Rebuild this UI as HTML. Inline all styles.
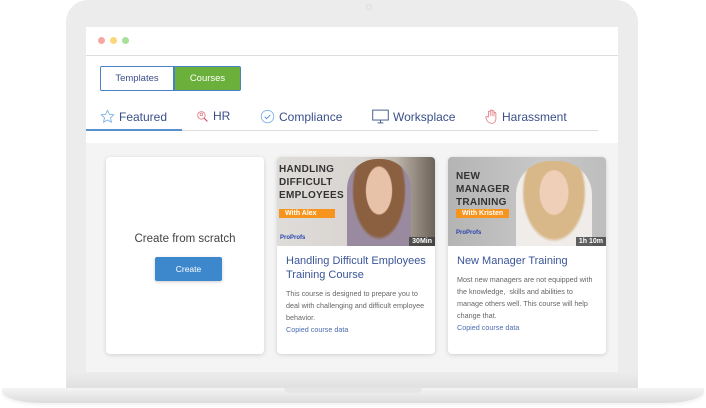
<!DOCTYPE html>
<html><head><meta charset="utf-8"><style>
*{margin:0;padding:0;box-sizing:border-box}
body{width:706px;height:408px;background:#fff;position:relative;overflow:hidden;font-family:"Liberation Sans",sans-serif}
.bezel{position:absolute;left:66px;top:0;width:572px;height:390px;background:#ececec;border-radius:22px 22px 0 0}
.screen{position:absolute;left:86px;top:27px;width:532px;height:345px;background:#f4f4f4;overflow:hidden}
.top{position:absolute;left:0;top:0;width:532px;height:116px;background:#fff}
.hdr{height:29px;border-bottom:1px solid #ddd;position:relative}
.dot{position:absolute;top:10px;width:7px;height:7px;border-radius:50%}
.base{position:absolute;left:2px;top:388px;width:702px;height:15px;background:linear-gradient(#f4f4f4,#dcdcdc);border-radius:2px 2px 40px 40px/2px 2px 12px 12px;box-shadow:0 2px 3px rgba(0,0,0,.06)}
.notch{position:absolute;left:282px;top:0;width:138px;height:5px;background:#e6e6e6;border-radius:0 0 6px 6px}
.seg{position:absolute;top:39px;height:25px;font-size:9.5px;line-height:23px;text-align:center}
.tabs{position:absolute;top:82px;left:14px;font-size:12px;color:#3a4f8a}
.tab{position:absolute;top:0;white-space:nowrap;display:flex;align-items:center;gap:4px}
.card{position:absolute;top:130px;width:158px;height:197px;background:#fff;border-radius:4px;box-shadow:0 1px 4px rgba(0,0,0,.15);overflow:hidden}
.img{height:89px;position:relative;overflow:hidden}
.it{position:absolute;font-weight:900;font-size:10px;line-height:13px;color:#333;letter-spacing:.3px}
.tag{position:absolute;background:#f7941d;color:#fff;font-size:7px;font-weight:bold;padding:1px 6px}
.pp{position:absolute;font-size:6px;font-weight:bold;color:#2a44b0}
.dur{position:absolute;right:0;bottom:0;background:rgba(60,60,60,.8);color:#fff;font-size:7px;font-weight:bold;padding:1px 3px}
.t{font-size:11px;color:#3a5598;margin:8px 9px 0;line-height:14px}
.d{font-size:7.2px;color:#666;margin:6px 9px 0;line-height:12px}
.c{font-size:7.2px;color:#4a6eb0;margin:1px 9px 0}
</style></head><body>
<div class="bezel"></div>
<div style="position:absolute;left:366px;top:4px;width:6px;height:6px;border:1px dotted #ccc;border-radius:50%"></div>
<div class="screen">
<div class="top">
<div class="hdr"><div class="dot" style="left:12px;background:#f5a8a3"></div><div class="dot" style="left:24px;background:#fcd77a"></div><div class="dot" style="left:36px;background:#a6e09a"></div></div>
<div class="seg" style="left:14px;width:74px;border:1px solid #4a80c8;color:#3a4f8a;border-radius:2px 0 0 2px">Templates</div>
<div class="seg" style="left:88px;width:67px;background:#6bb03a;border:1px solid #4a80c8;color:#fff;border-radius:0 2px 2px 0">Courses</div>
<div style="position:absolute;left:0;top:103px;width:512px;height:1px;background:#ddd"></div>
<div style="position:absolute;left:0;top:102px;width:96px;height:2px;background:#5a8fcf"></div>
<div class="tabs">
<div class="tab" style="left:0"><svg width="15" height="15" viewBox="0 0 24 24"><path d="M12 2l3 6.5 7 .8-5.2 4.8 1.5 7L12 17.6 5.7 21l1.5-7L2 9.3l7-.8z" fill="none" stroke="#7ab0e8" stroke-width="1.4"/></svg>Featured</div>
<div class="tab" style="left:96px"><svg width="13" height="13" viewBox="0 0 24 24"><circle cx="10" cy="10" r="7" fill="none" stroke="#e07a80" stroke-width="1.6"/><circle cx="10" cy="8" r="2.5" fill="none" stroke="#e07a80" stroke-width="1.4"/><path d="M15 15l6 6" stroke="#d04050" stroke-width="2"/></svg>HR</div>
<div class="tab" style="left:160px"><svg width="15" height="15" viewBox="0 0 24 24"><circle cx="12" cy="12" r="10" fill="none" stroke="#7ab0e8" stroke-width="1.4"/><path d="M7.5 12.5l3 3 6-6" fill="none" stroke="#5a90d8" stroke-width="1.6"/></svg>Compliance</div>
<div class="tab" style="left:272px"><svg width="17" height="15" viewBox="0 0 24 20"><rect x="1" y="1" width="22" height="14" fill="none" stroke="#4a5f90" stroke-width="1.4"/><path d="M8 19h8M12 15v4" stroke="#4a5f90" stroke-width="1.4"/></svg>Worksplace</div>
<div class="tab" style="left:385px"><svg width="13" height="15" viewBox="0 0 20 24"><path d="M5 13V5a1.5 1.5 0 013 0v6V3a1.5 1.5 0 013 0v8V4a1.5 1.5 0 013 0v8V7a1.5 1.5 0 013 0v9c0 4-3 7-6.5 7S4 21 2 17l-1-3a1.5 1.5 0 013-1z" fill="none" stroke="#e07a80" stroke-width="1.3"/></svg>Harassment</div>
</div>
</div>
<div class="card" style="left:20px"><div style="position:absolute;top:76px;width:100%;text-align:center;font-size:11.5px;color:#444">Create from scratch</div><div style="position:absolute;left:49px;top:100px;width:67px;height:24px;background:#3d88cc;color:#fff;font-size:8.5px;text-align:center;line-height:24px;border-radius:2px;box-shadow:0 1px 3px rgba(0,0,0,.2)">Create</div></div>
<div class="card" style="left:191px"><div class="img" style="background:linear-gradient(90deg,#dedcd9 0,#d8d4d0 55%,#bfb6ac 75%,#6c6258 100%)">
<div style="position:absolute;left:70px;top:2px;width:64px;height:90px;border-radius:30px 30px 0 0;background:radial-gradient(ellipse at 50% 35%,#e8c2a8 0 28%,#8a6040 30% 55%,#9a8aa0 60%)"></div>
<div class="it" style="left:2px;top:6px">HANDLING<br>DIFFICULT<br>EMPLOYEES</div><div class="tag" style="left:2px;top:52px;width:56px">With Alex</div><div class="pp" style="left:3px;top:78px">ProProfs</div><div class="dur">30Min</div></div>
<div class="t">Handling Difficult Employees Training Course</div><div class="d">This course is designed to prepare you to deal with challenging and difficult employee behavior.</div><div class="c">Copied course data</div></div>
<div class="card" style="left:362px"><div class="img" style="background:linear-gradient(90deg,#b4b4b4,#c8c8c8 60%,#bdbdbd)">
<div style="position:absolute;left:68px;top:4px;width:76px;height:90px;border-radius:34px 34px 0 0;background:radial-gradient(ellipse at 50% 35%,#efcfb8 0 26%,#d8b888 28% 55%,#f0ecea 60%)"></div>
<div class="it" style="left:8px;top:13px">NEW<br>MANAGER<br>TRAINING</div><div class="tag" style="left:8px;top:52px">With Kristen</div><div class="pp" style="left:8px;top:73px">ProProfs</div><div class="dur">1h 10m</div></div>
<div class="t">New Manager Training</div><div class="d">Most new managers are not equipped with the knowledge,&nbsp; skills and abilities to manage others well. This course will help change that.</div><div class="c">Copied course data</div></div>
</div>
<div style="position:absolute;left:66px;top:372px;width:572px;height:17px;background:linear-gradient(#ececec,#e0e0e0)"></div>
<div class="base"><div class="notch"></div></div>
</body></html>
